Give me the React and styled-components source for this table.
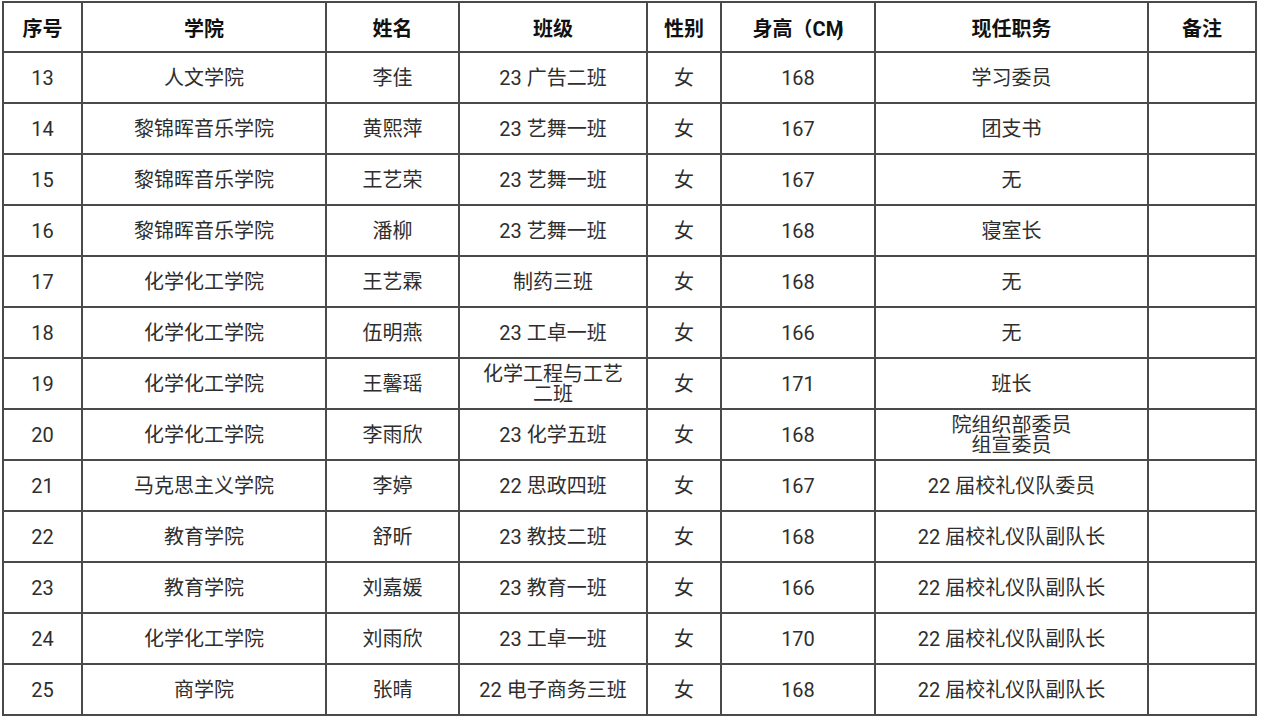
import React from 'react';
import styled, { createGlobalStyle } from 'styled-components';

const GlobalStyle = createGlobalStyle`
    html, body {
        margin: 0;
        padding: 0;
        background: #ffffff;
    }
    body {
        font-family: Roboto, "Noto Sans CJK SC", sans-serif;
        color: #2e2e2e;
    }
`;

const Page = styled.div`
    padding: 1px 0 0 2px;
`;

const Table = styled.table`
    border-collapse: collapse;
    table-layout: fixed;
    width: 1255px;
    border: 2px solid #4a4a4a;
`;

const HeadCell = styled.th`
    height: 48px;
    padding: 0;
    border: 2px solid #4a4a4a;
    font-size: 20px;
    font-weight: 700;
    color: #111;
    text-align: center;
    vertical-align: middle;
    white-space: nowrap;
    overflow: hidden;
`;

const Cell = styled.td`
    height: 49px;
    padding: 0;
    border: 2px solid #4a4a4a;
    font-size: 20px;
    line-height: 20px;
    text-align: center;
    vertical-align: middle;
    white-space: pre-line;
`;

// the closing paren sits on top of the M in the source sheet
const Squeezed = styled.span`
    letter-spacing: -0.34em;
`;

const columns = [79, 244, 133, 188, 74, 154, 273, 108];

const rows = [
    ['13', '人文学院', '李佳', '23 广告二班', '女', '168', '学习委员'],
    ['14', '黎锦晖音乐学院', '黄熙萍', '23 艺舞一班', '女', '167', '团支书'],
    ['15', '黎锦晖音乐学院', '王艺荣', '23 艺舞一班', '女', '167', '无'],
    ['16', '黎锦晖音乐学院', '潘柳', '23 艺舞一班', '女', '168', '寝室长'],
    ['17', '化学化工学院', '王艺霖', '制药三班', '女', '168', '无'],
    ['18', '化学化工学院', '伍明燕', '23 工卓一班', '女', '166', '无'],
    ['19', '化学化工学院', '王馨瑶', '化学工程与工艺\n二班', '女', '171', '班长'],
    ['20', '化学化工学院', '李雨欣', '23 化学五班', '女', '168', '院组织部委员\n组宣委员'],
    ['21', '马克思主义学院', '李婷', '22 思政四班', '女', '167', '22 届校礼仪队委员'],
    ['22', '教育学院', '舒昕', '23 教技二班', '女', '168', '22 届校礼仪队副队长'],
    ['23', '教育学院', '刘嘉媛', '23 教育一班', '女', '166', '22 届校礼仪队副队长'],
    ['24', '化学化工学院', '刘雨欣', '23 工卓一班', '女', '170', '22 届校礼仪队副队长'],
    ['25', '商学院', '张晴', '22 电子商务三班', '女', '168', '22 届校礼仪队副队长'],
];

const App = () => {
    return (
        <Page>
            <GlobalStyle />
            <Table>
                <colgroup>
                    {columns.map((w, i) => (
                        <col key={i} style={{ width: w }} />
                    ))}
                </colgroup>
                <thead>
                    <tr>
                        <HeadCell>序号</HeadCell>
                        <HeadCell>学院</HeadCell>
                        <HeadCell>姓名</HeadCell>
                        <HeadCell>班级</HeadCell>
                        <HeadCell>性别</HeadCell>
                        <HeadCell>
                            身高（C<Squeezed>M</Squeezed>)
                        </HeadCell>
                        <HeadCell>现任职务</HeadCell>
                        <HeadCell>备注</HeadCell>
                    </tr>
                </thead>
                <tbody>
                    {rows.map((r) => (
                        <tr key={r[0]}>
                            {r.map((v, i) => (
                                <Cell key={i}>{v}</Cell>
                            ))}
                            <Cell />
                        </tr>
                    ))}
                </tbody>
            </Table>
        </Page>
    );
};

export default App;
